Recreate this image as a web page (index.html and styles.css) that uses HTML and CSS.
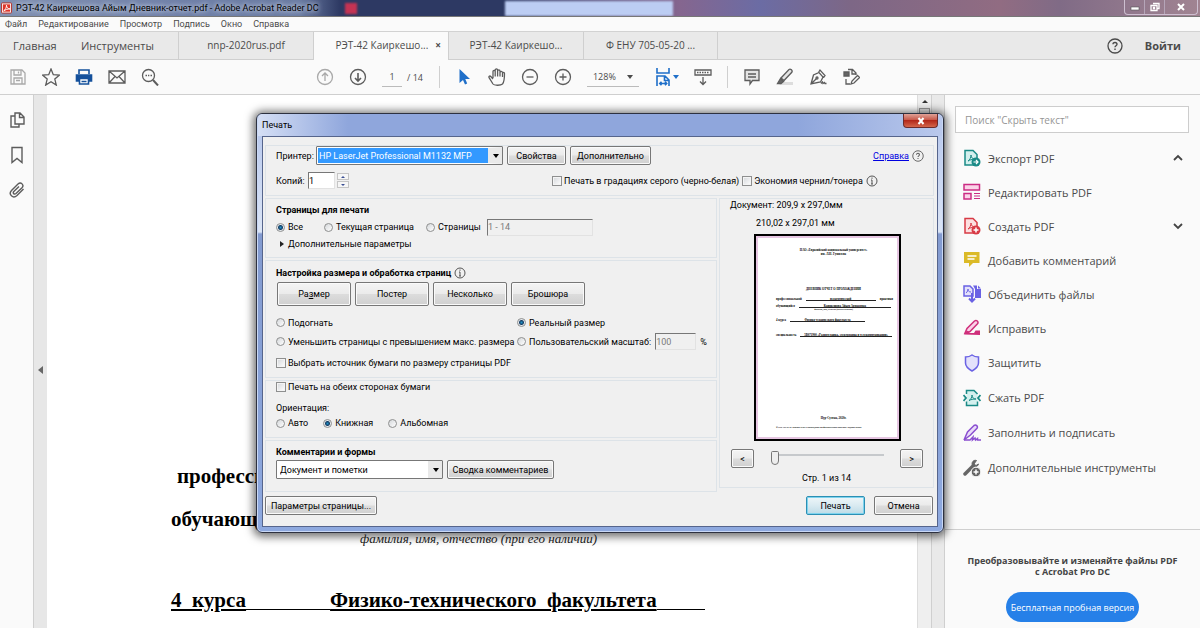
FILE: index.html
```html
<!DOCTYPE html>
<html lang="ru">
<head>
<meta charset="utf-8">
<title>РЭТ-42 Каиркешова Айым Дневник-отчет.pdf - Adobe Acrobat Reader DC</title>
<link rel="stylesheet" href="styles.css">
</head>
<body class="app">
<svg class="defs" aria-hidden="true">
  <symbol id="pdf" viewBox="0 0 18 18"><path d="M2 1.500h8l4 4V16H2z"/><path d="M5 12c2-1 3-4 3-6 0 3 2 4 4 4-3 0-5 1-7 2z" stroke-width="1" fill="none"/></symbol>
  <symbol id="info" viewBox="0 0 12 12"><circle cx="6" cy="6" r="5" fill="none" stroke="#555"/><path d="M6 5v4M5 5h1M5 9h2M6 2.500v1.300" stroke="#555" fill="none"/></symbol>
  <symbol id="help" viewBox="0 0 16 16"><circle cx="8" cy="8" r="7" fill="none" stroke="currentColor" stroke-width="1.300"/><path d="M6 6.300C6 3.800 10 4 10 6.300 10 7.800 8 7.800 8 9.300M8 10.500v1.500" fill="none" stroke="currentColor" stroke-width="1.400"/></symbol>
</svg>

<header class="titlebar">
  <svg class="logo" viewBox="0 0 12 12"><rect x=".5" y=".5" width="11" height="11" rx="1" fill="#fff" stroke="#b5271f"/><rect x="2" y="2" width="8" height="8" fill="#dd3428"/><path d="M3 9c2-1 3-4 3-6 0 3 2 4 4 4-3 0-5 1-7 2z" fill="none" stroke="#fff"/></svg>
  <span class="title">РЭТ-42 Каиркешова Айым Дневник-отчет.pdf - Adobe Acrobat Reader DC</span>
  <div class="behind"><i class="red"></i><i class="tabblur"></i></div>
  <div class="winctl">
    <button aria-label="Свернуть"><svg viewBox="0 0 12 10"><rect x="2" y="5" width="8" height="3" fill="#fff" stroke="#555" stroke-width=".6"/></svg></button>
    <button aria-label="Восстановить"><svg viewBox="0 0 12 10"><path d="M4 1.500h6v5H8M2 3.500h6v5H2zM4.500 5.500h1v1h-1z" fill="none" stroke="#fff" stroke-width="1.300"/></svg></button>
    <button class="wide" aria-label="Закрыть"><svg viewBox="0 0 12 10"><path d="M3 2l6 6M9 2L3 8" stroke="#fff" stroke-width="2"/></svg></button>
  </div>
</header>

<nav class="menubar">
  <a href="#">Файл</a><a href="#">Редактирование</a><a href="#">Просмотр</a><a href="#">Подпись</a><a href="#">Окно</a><a href="#">Справка</a>
</nav>

<nav class="tabs">
  <a class="home" href="#">Главная</a><a class="tools" href="#">Инструменты</a>
  <a class="tab" href="#">nnp-2020rus.pdf</a>
  <a class="tab active" href="#">РЭТ-42 Каиркешо...<b>×</b></a>
  <a class="tab" href="#">РЭТ-42 Каиркешо...</a>
  <a class="tab" href="#">Ф ЕНУ 705-05-20 ...</a>
  <div class="account"><svg class="qhelp"><use href="#help"/></svg><a class="login" href="#">Войти</a></div>
</nav>

<div class="toolbar">
  <div class="tgroup files">
    <button class="dim" aria-label="Сохранить"><svg viewBox="0 0 18 18"><path d="M2 2h11l3 3v11H2zM5 2v5h7V2M5 16v-6h8v6M9.500 3.500v2M7 12.500h4"/></svg></button>
    <button aria-label="Избранное"><svg viewBox="0 0 18 18"><path d="M9 1l2.300 5.700 6.200.4-4.700 4 1.500 6L9 13.800 3.700 17.100l1.500-6-4.700-4 6.200-.4z"/></svg></button>
    <button class="print" aria-label="Печать"><svg viewBox="0 0 18 18"><path d="M4 6V2h10v4" /><path d="M1.500 7h15v6h-15z" fill="#15519c"/><path d="M4.500 10.500h9V16h-9z" fill="#fff"/><path d="M6.500 13.500h5" stroke-width="1.500"/></svg></button>
    <button aria-label="Почта"><svg viewBox="0 0 18 18"><path d="M1 3h16v12H1zM1 3l8 7 8-7M1 15l6-6.500M17 15l-6-6.500"/></svg></button>
    <button aria-label="Поиск"><svg viewBox="0 0 18 18"><circle cx="7.500" cy="7.500" r="6"/><path d="M12 12l5 5.500" stroke-width="2"/><path d="M4.500 7.500H6M7 7.500h1.300M9.500 7.500H11" stroke-width="1.600"/></svg></button>
  </div>
  <div class="tgroup pages">
    <button class="dim" aria-label="Предыдущая страница"><svg viewBox="0 0 18 18"><circle cx="9" cy="9" r="7.500"/><path d="M9 13V5M6 8l3-3 3 3"/></svg></button>
    <button aria-label="Следующая страница"><svg viewBox="0 0 18 18"><circle cx="9" cy="9" r="7.500"/><path d="M9 5v8M6 10l3 3 3-3" stroke-width="1.600"/></svg></button>
    <span class="pageno"><input aria-label="Страница" value="1"><span>/ 14</span></span>
  </div>
  <div class="tgroup view">
    <button aria-label="Выделение"><svg viewBox="0 0 18 18"><path d="M4.500 1v14l3.500-3 2 4.500 2.200-1L10.300 11H15z" fill="#1f6fc9" stroke="none"/></svg></button>
    <button aria-label="Рука"><svg viewBox="0 0 18 18"><path d="M5 11L2.800 8.500C1.700 7.300.4 8.500 1.200 9.800L5 16c1 1.500 7.500 1.800 9.500 0 1.800-2 2-5 2-10.500 0-1.500-2-1.500-2 0V9M5 10V3.500c0-1.500 2.200-1.500 2.200 0V8.500M7.200 8V2c0-1.500 2.400-1.500 2.400 0v6.500M9.600 3c0-1.500 2.400-1.500 2.400 0v5.500M12 4.500c0-1.500 2.400-1.500 2.400 0"/></svg></button>
    <button aria-label="Уменьшить"><svg viewBox="0 0 18 18"><circle cx="9" cy="9" r="7.500"/><path d="M5.500 9h7"/></svg></button>
    <button aria-label="Увеличить"><svg viewBox="0 0 18 18"><circle cx="9" cy="9" r="7.500"/><path d="M5.500 9h7M9 5.500v7"/></svg></button>
    <button class="zoom">128%<i class="caret"></i></button>
    <button class="fit" aria-label="По ширине"><svg viewBox="0 0 18 20"><path d="M3 1v5h12V1M3 19V9h8l4 4v6M10.500 9v4.500H15M6 16.500h6M7.500 14.800L5.800 16.500l1.700 1.700M11 14.800l1.700 1.700-1.700 1.700"/></svg><i class="caret"></i></button>
    <button aria-label="Прокрутка"><svg viewBox="0 0 18 18"><path d="M1 2h16v5H1zM9 9v7M6 13.500L9 16.500l3-3"/><path d="M3 4.500h12" stroke-dasharray="1.500 1"/></svg></button>
  </div>
  <div class="tgroup notes">
    <button aria-label="Комментарий"><svg viewBox="0 0 18 18"><path d="M2 2h14v10.500H9.500L7 16v-3.500H2zM5 6h8M5 9h8" fill="#e4e4e4"/></svg></button>
    <button aria-label="Выделить текст"><svg viewBox="0 0 18 18"><path d="M7 14h10v3H3z" fill="#ddd" stroke="none"/><path d="M5 10l8-8.500c1.500-1 4 1 2.800 2.800L8 12.500z" fill="#e4e4e4"/><path d="M4.500 10.500l3 3L5 15.500H1.500z" fill="#666"/></svg></button>
    <button aria-label="Подписать"><svg viewBox="0 0 18 18"><path d="M2 16L4.500 7 10 4.500l4 4.500-2.500 5zM2 16l5.500-5.500M9.500 4.500L11 2l5 5.500-1.500 2M12 15.500l1.500-1.500.5 1.500 1.500-1 .5 1h1.500"/><circle cx="8" cy="10" r="1"/></svg></button>
    <button aria-label="Штамп"><svg viewBox="0 0 18 18"><path d="M2 4h5v4H2z" fill="#666"/><path d="M6 1.500h4.500L14 5v2M10 1.500V6h4M4 11v5h4M9 16l1-3 5.500-5.500 2 2L12 15z"/></svg></button>
  </div>
</div>

<main class="workspace">
  <aside class="rail">
    <svg viewBox="0 0 18 18"><path d="M7 2h5l4 4v7H7zM11.500 2v4.500H16M7 5H3v11h8v-3"/></svg>
    <svg viewBox="0 0 18 18"><path d="M4 1.500h10v15L9 12.500l-5 4z"/></svg>
    <svg viewBox="0 0 18 18"><path d="M15.500 8l-6.500 6.500c-4 3.500-9-1-5.500-5L10 3c3-2.600 6.500 1 4 3.800L8 12.500c-1.800 1.500-3.600-.4-2.200-2L11 5.500"/></svg>
  </aside>
  <div class="splitter"><i></i></div>
  <article class="page">
    <p class="line first">профессиональной  <u>  учебной  </u>  практики</p>
    <p class="line">обучающегося  <u>     Каиркешова Айым          </u></p>
    <p class="caption">фамилия, имя, отчество (при его наличии)</p>
    <p class="line course"><u>4  курса</u><span class="gap"></span><u>Физико-технического  факультета</u><span class="gap short"></span></p>
  </article>
  <div class="scroll"><i class="up"></i><i class="thumb"></i></div>
  <div class="strip"></div>
  <aside class="panel">
    <input class="search" type="text" aria-label="Поиск" placeholder="Поиск &quot;Скрыть текст&quot;">
    <ul class="toolist">
      <li><a href="#"><svg viewBox="0 0 18 18" stroke="#1a8a86" fill="#d4f0ee"><use href="#pdf"/><circle cx="13" cy="13" r="4.500" fill="#1a8a86" stroke="none"/><path d="M10.500 13h4M13 11l2 2-2 2" stroke="#fff" fill="none" stroke-width="1.200"/></svg>Экспорт PDF<svg class="chev" viewBox="0 0 12 12"><path d="M2 8l4-4 4 4"/></svg></a></li>
      <li><a href="#"><svg viewBox="0 0 18 18" stroke="#cb2c84" fill="#fbd3e8"><path d="M1 1.500h15.500V7H1zM1 10.500h7V16H1z"/><path d="M11 10.500h6M11 13h6M11 15.500h6" stroke-width="1"/></svg>Редактировать PDF</a></li>
      <li><a href="#"><svg viewBox="0 0 18 18" stroke="#d83b46" fill="#fde0e1"><use href="#pdf"/><circle cx="13" cy="13" r="4.500" fill="#d83b46" stroke="none"/><path d="M10.500 13h5M13 10.500v5" stroke="#fff" fill="none"/></svg>Создать PDF<svg class="chev" viewBox="0 0 12 12"><path d="M2 4l4 4 4-4"/></svg></a></li>
      <li><a href="#"><svg viewBox="0 0 18 18"><path d="M1 1h15.500v11H10l-4 4v-4H1z" fill="#dbba27" stroke="none"/><path d="M4.500 5h9M4.500 8h7" stroke="#fff"/></svg>Добавить комментарий</a></li>
      <li><a href="#"><svg viewBox="0 0 18 18" stroke="#6a62e4" fill="#e3e1fb"><path d="M1 1h6l3 3v7H1z"/><path d="M3 8c1.500-1 2-3 2-4 0 2 1 3 3 3" fill="none" stroke-width="1"/><path d="M10 .5h4V4h4v9h-6V4z" fill="#6a62e4" stroke="none"/><path d="M15 .5L18 3.500h-3z" fill="#6a62e4" stroke="none"/><path d="M9 8v8M6 13.500l3 3 3-3" stroke-width="2" fill="none"/></svg>Объединить файлы</a></li>
      <li><a href="#"><svg viewBox="0 0 18 18" stroke="#cf2f7b" fill="#fbd3e8"><path d="M2 14L4 9.500 11.500 2c2-1.500 4.500.7 3 2.800L7 12.500z"/><path d="M1 15.500l3-4 3 2.500h4l1.500-2.500H17v4.500z" fill="#cf2f7b" stroke="none"/></svg>Исправить</a></li>
      <li><a href="#"><svg viewBox="0 0 18 18" stroke="#6a62e4" fill="#e3e1fb"><path d="M9 1c2 1.500 4 2 6.500 2v6c0 4-3 6-6.500 8-3.500-2-6.500-4-6.500-8V3C5 3 7 2.500 9 1z"/></svg>Защитить</a></li>
      <li><a href="#"><svg viewBox="0 0 18 18" stroke="#1a8a86" fill="#d4f0ee"><path d="M3.500 1.500H11L14.500 5v11.500h-11z" stroke="none"/><path d="M3.500 5V1.500H11L14.500 5M3.500 12.500v4h11v-4" fill="none"/><path d="M6 11.500c2-1 3-3.500 3-5.500 0 3 2 4 4 4-3 0-5 .5-7 1.500z" fill="none" stroke-width="1"/><path d="M.5 6L3 9 .5 12M17.500 6L15 9l2.500 3" fill="none" stroke-width="1.800"/></svg>Сжать PDF</a></li>
      <li><a href="#"><svg viewBox="0 0 18 18" stroke="#8a4fd0" fill="#eadcf9"><path d="M1 16l3.500-8L11 1.500c2-1.300 4.300.7 3 2.800L7.500 11z"/><path d="M1 16h6l3-3-.5 3 2.500-2 .5 2 2-1.500v1.500H18" fill="none"/></svg>Заполнить и подписать</a></li>
      <li><a href="#"><svg viewBox="0 0 18 18" stroke="#666" fill="none"><path d="M2 15l8-8" stroke-width="3.500" stroke-linecap="round"/><path d="M13.500 1.500c-3-1-5.500 2-4 5 1 2 5 2 6-1.500L13 6.500 11 5z" fill="#666"  stroke-width="1"/><circle cx="13" cy="13" r="4.800" fill="#666" stroke="#fbfbfb" stroke-width="1"/><path d="M10.500 13h5M13 10.500v5" stroke="#fff"/></svg>Дополнительные инструменты</a></li>
    </ul>
    <div class="promo">
      <p>Преобразовывайте и изменяйте файлы PDF<br>с Acrobat Pro DC</p>
      <button>Бесплатная пробная версия</button>
    </div>
  </aside>
</main>

<section class="dialog" role="dialog" aria-label="Печать">
  <header class="dlg-title"><span>Печать</span><button aria-label="Закрыть"><svg viewBox="0 0 12 10"><path d="M3.500 2l5 6M8.500 2l-5 6" stroke="#fff" stroke-width="2"/></svg></button></header>
  <form class="dlg-body">
    <fieldset class="group top">
      <div class="row printer">
        <label for="printer">Принтер:</label>
        <span class="combo blue"><select id="printer"><option>HP LaserJet Professional M1132 MFP</option></select></span>
        <button type="button" class="btn props">Свойства</button>
        <button type="button" class="btn adv">Дополнительно</button>
        <a class="help" href="#">Справка</a><svg class="mini"><use href="#help"/></svg>
      </div>
      <div class="row copies">
        <label for="copies">Копий:</label><input class="field count" id="copies" value="1">
        <span class="spin"><button type="button" aria-label="Больше"><i class="caret"></i></button><button type="button" aria-label="Меньше"><i class="caret"></i></button></span>
        <label class="opt check gray"><input type="checkbox">Печать в градациях серого (черно-белая)</label>
        <label class="opt check"><input type="checkbox">Экономия чернил/тонера</label><svg class="mini"><use href="#info"/></svg>
      </div>
    </fieldset>

    <div class="columns">
      <div class="left">
        <fieldset class="group range">
          <h2>Страницы для печати</h2>
          <div class="row rangeopts">
            <label class="opt"><input type="radio" name="range" checked>Все</label>
            <label class="opt"><input type="radio" name="range">Текущая страница</label>
            <label class="opt"><input type="radio" name="range">Страницы</label>
            <input class="field off pagesfield" aria-label="Диапазон страниц" value="1 - 14" disabled>
          </div>
          <div class="more"><i></i>Дополнительные параметры</div>
        </fieldset>
        <fieldset class="group sizing">
          <h2>Настройка размера и обработка страниц <svg class="mini"><use href="#info"/></svg></h2>
          <div class="modes">
            <button type="button" class="btn">Ра<u>з</u>мер</button><button type="button" class="btn">Постер</button><button type="button" class="btn">Несколько</button><button type="button" class="btn">Брошюра</button>
          </div>
          <div class="scales">
            <label class="opt"><input type="radio" name="scale">Подогнать</label>
            <label class="opt"><input type="radio" name="scale" checked>Реальный размер</label>
            <label class="opt"><input type="radio" name="scale">Уменьшить страницы с превышением макс. размера</label>
            <div class="row custom"><label class="opt"><input type="radio" name="scale">Пользовательский масштаб:</label><input class="field off pct" aria-label="Масштаб" value="100" disabled><span>%</span></div>
          </div>
          <label class="opt check source"><input type="checkbox">Выбрать источник бумаги по размеру страницы PDF</label>
        </fieldset>
        <fieldset class="group orient">
          <label class="opt check"><input type="checkbox">Печать на обеих сторонах бумаги</label>
          <p>Ориентация:</p>
          <div class="row orientopts">
            <label class="opt"><input type="radio" name="orient">Авто</label>
            <label class="opt"><input type="radio" name="orient" checked>Книжная</label>
            <label class="opt"><input type="radio" name="orient">Альбомная</label>
          </div>
        </fieldset>
        <fieldset class="group comments">
          <h2><label for="forms">Комментарии и формы</label></h2>
          <div class="row">
            <span class="combo"><select id="forms"><option>Документ и пометки</option></select></span>
            <button type="button" class="btn summary">Сводка комментариев</button>
          </div>
        </fieldset>
      </div>
      <fieldset class="group right">
        <p class="docsize">Документ: 209,9 x 297,0мм</p>
        <p class="papersize">210,02 x 297,01 мм</p>
        <div class="preview">
          <p class="c uni">НАО «Евразийский национальный университет»<br>им. Л.Н. Гумилева</p>
          <p class="c head">ДНЕВНИК ОТЧЕТ О ПРОХОЖДЕНИИ</p>
          <p class="pl"><span>профессиональной</span><u>педагогической</u><span>практики</span></p>
          <p class="pl second"><span>обучающийся</span><u>Каиркешова Айым Армановна</u></p>
          <p class="c sub">фамилия, имя, отчество (при его наличии)</p>
          <p class="pl kurs"><span>4 курса</span><u>Физико-технического факультета</u></p>
          <p class="pl spec"><span>специальность</span><u>5В071900 «Радиотехника, электроника и телекоммуникации»</u></p>
          <p class="c city">Нур-Султан, 2020г.</p>
          <p class="foot">Ф ЕНУ 705-05-20 Дневник-отчет о прохождении профессиональной практики. Издание второе</p>
        </div>
        <div class="pager">
          <button type="button" class="btn">&lt;</button><input type="range" min="1" max="14" value="1" aria-label="Страница"><button type="button" class="btn">&gt;</button>
        </div>
        <p class="pageof">Стр. 1 из 14</p>
      </fieldset>
    </div>
    <footer class="actions">
      <button type="button" class="btn setup">Параметры страницы...</button>
      <button type="button" class="btn default">Печать</button>
      <button type="button" class="btn">Отмена</button>
    </footer>
  </form>
</section>
</body>
</html>
```
FILE: styles.css
```css
* { box-sizing: border-box; }
body, p, h2, ul, fieldset { margin: 0; padding: 0; }
button, input, select { font: inherit; color: inherit; margin: 0; padding: 0; }
button { background: none; border: 0; }
a { color: inherit; text-decoration: none; }
fieldset { border: 0; min-width: 0; }
svg { flex: none; }
.defs { display: none; }

.app {
  position: relative;
  min-height: 100vh;
  overflow: hidden;
  display: flex;
  flex-direction: column;
  background: #fafafa;
  color: #4b4b4b;
  font-family: "Open Sans", "Noto Sans", sans-serif;
  font-size: 11px;
}

/* window title */
.titlebar {
  height: 17px;
  display: flex;
  align-items: center;
  padding-left: 1px;
  overflow: hidden;
  color: #000;
  border-bottom: 1px solid #777;
  background: linear-gradient(90deg, #8191b2 0, #7081a8 180px, #6b7ca3 300px, #2d3963 340px, #2d3963 505px, #85668f 680px, #6b6ca4 760px, #7d6786 850px, #916c82 1000px, #806b86 1060px, #a18492 100%);
}
.logo { width: 11px; height: 12px; margin-right: 4px; }
.title { font-family: Roboto, sans-serif; font-size: 9px; line-height: 14px; white-space: nowrap; min-width: 325px; text-shadow: 0 0 5px #c8d2e4, 0 0 5px #c8d2e4; }
.behind { display: flex; align-items: center; gap: 148px; flex: 1; padding-left: 4px; filter: blur(1px); }
.behind .red { width: 12px; height: 11px; background: #c43353; }
.behind .tabblur { width: 168px; height: 15px; background: #bccdf3; }
.winctl { display: flex; align-self: flex-start; height: 15px; margin-right: 2px; border: 1px solid #cdbfd0; border-top: 0; border-radius: 0 0 4px 4px; }
.winctl button { width: 20px; display: grid; place-items: center; border-right: 1px solid #b5a5b8; }
.winctl .wide { width: 32px; border: 0; }
.winctl svg { width: 12px; height: 10px; }

.menubar { height: 15px; display: flex; align-items: center; gap: 11px; padding-left: 5px; font-family: Roboto, sans-serif; font-size: 9px; border-bottom: 1px solid #d2d2d2; }

/* document tabs */
.tabs { height: 28px; display: flex; align-items: stretch; background: #e9e9e9; border-bottom: 1px solid #cfcfcf; line-height: 27px; }
.home { width: 68px; padding-left: 13px; }
.tools { width: 110px; padding-left: 13px; }
.tab { width: 135px; border-left: 1px solid #cfcfcf; text-align: center; font-size: 10px; white-space: nowrap; }
.tab.active { background: #fafafa; height: 28px; display: flex; justify-content: flex-end; gap: 7px; padding-right: 7px; }
.tab:nth-child(6) { border-right: 1px solid #cfcfcf; }
.account { margin-left: auto; display: flex; align-items: center; gap: 22px; padding-right: 19px; }
.qhelp { width: 16px; height: 16px; }
.login { font-weight: 700; }

/* toolbar */
.toolbar { height: 35px; display: flex; align-items: center; padding-left: 9px; border-bottom: 1px solid #cfcfcf; flex: none; }
.tgroup { display: flex; align-items: center; gap: 15px; height: 22px; }
.tgroup svg { width: 18px; height: 18px; fill: none; stroke: #5c5c5c; stroke-width: 1.3; display: block; }
.tgroup .dim svg { stroke: #a9a9a9; }
.tgroup .print svg { stroke: #15519c; stroke-width: 1.6; }
.pages { margin-left: 157px; }
.view { margin-left: 16px; padding-left: 15px; border-left: 1px solid #cfcfcf; }
.notes { margin-left: 15px; padding-left: 15px; border-left: 1px solid #cfcfcf; }
.pageno { display: flex; gap: 5px; font-size: 9px; align-items: center; }
.pageno input { width: 20px; height: 20px; text-align: center; border: 0; border-bottom: 1px solid #bbb; background: none; }
.caret { border: 3px solid transparent; border-top: 4px solid currentColor; border-bottom: 0; }
.zoom { width: 52px; height: 20px; padding: 0 6px; font-size: 9px; display: flex; align-items: center; justify-content: space-between; border-bottom: 1px solid #bbb; }
.fit { display: flex; align-items: center; gap: 1px; color: #1f6fc9; }
.tgroup .fit svg { stroke: #1f6fc9; height: 20px; stroke-width: 1.6; }

/* workspace */
.workspace { flex: 1; display: flex; min-height: 533px; }
.rail { width: 34px; padding-top: 16px; display: flex; flex-direction: column; align-items: center; gap: 17px; border-right: 1px solid #cfcfcf; }
.rail svg { width: 18px; height: 18px; fill: none; stroke: #5c5c5c; stroke-width: 1.4; }
.splitter { width: 13px; background: #e7e7e7; display: flex; justify-content: flex-end; padding-right: 4px; align-items: center; }
.splitter i { border: 4px solid transparent; border-right: 5px solid #666; border-left: 0; margin-bottom: 16px; margin-top: 32px; }
.page { flex: 1; min-width: 0; overflow: hidden; background: #fff; color: #000; padding: 360px 0 0 124px; font-family: "Liberation Serif", serif; font-size: 21px; line-height: 43px; }
.page p { white-space: pre; }
.line { font-weight: bold; }
.line.first { padding-left: 6px; }
.caption { padding-left: 189px; font-size: 13px; line-height: 20px; margin-top: -12px; font-style: italic; color: #222; }
.course { display: flex; margin-top: 30px; }
.gap { width: 84px; height: 31px; border-bottom: 1px solid #000; }
.gap.short { width: 48px; }
.scroll { width: 14px; background: #efefef; border-left: 1px solid #ddd; padding-top: 5px; display: flex; flex-direction: column; align-items: center; gap: 5px; }
.up { border: 3px solid transparent; border-bottom: 3px solid #333; border-top: 0; }
.thumb { width: 11px; height: 330px; border: 1px solid #999; background: #e3e3e3; }
.strip { width: 14px; background: #e9e9e9; border: 1px solid #cfcfcf; border-width: 0 1px; }

.panel { width: 255px; display: flex; flex-direction: column; }
.search { height: 27px; margin: 11px 11px 0 10px; padding-left: 9px; border: 1px solid #cdcdcd; background: #fff; font-size: 10px; }
.search::placeholder { color: #959595; opacity: 1; }
.toolist { list-style: none; padding: 8px 16px 0 18px; }
.toolist li { height: 34px; }
.toolist li:nth-child(n+7) { height: 35px; }
.toolist a { height: 100%; display: flex; align-items: center; gap: 7px; white-space: nowrap; }
.toolist svg { width: 18px; height: 18px; stroke-width: 1.5; }
.toolist .chev { width: 12px; height: 12px; margin-left: auto; fill: none; stroke: #444; stroke-width: 1.8; }
.promo { flex: 1; margin-top: 44px; border-top: 1px solid #cfcfcf; text-align: center; padding-top: 25px; }
.promo p { font-size: 9px; font-weight: 700; line-height: 11px; color: #444; }
.promo button { margin-top: 15px; height: 30px; padding: 0 5px; border-radius: 15px; background: #2680e8; color: #fff; font-size: 9px; white-space: nowrap; }

/* print dialog */
.dialog {
  position: absolute;
  top: 113px;
  left: 50%;
  width: 688px;
  transform: translateX(-50%);
  padding: 0 5px 5px;
  border: 1px solid #2d3140;
  border-radius: 6px;
  background: linear-gradient(#b4c5ec 0, #dbe5f6 118px, #839bd0 120px, #8ea9df 100%);
  box-shadow: inset 0 0 0 1px #c9d8f5, 0 1px 8px 3px rgba(0, 0, 0, .55);
  color: #000;
  font-family: Roboto, "Noto Sans", sans-serif;
  font-size: 9px;
  line-height: 12px;
}
.dlg-title { height: 22px; margin: 0 -4px; padding: 0 4px 0 1px; display: flex; justify-content: space-between; background: linear-gradient(90deg, #d5dff5, #8fa6dc 90px, #8fa6dc 540px, #b9c8ec); border-radius: 5px 5px 0 0; }
.dlg-title span { line-height: 22px; padding-left: 3px; }
.dlg-title button { width: 35px; height: 14px; display: grid; place-items: center; border: 1px solid #6c2b2b; border-top: 0; border-radius: 0 0 4px 4px; background: linear-gradient(#e0a297, #c8594a 45%, #b3281a 50%, #d4654a); }
.dlg-title svg { width: 12px; height: 10px; }
.dlg-body { background: #f0f0f0; border: 1px solid #56658c; padding: 8px 3px 11px 2px; }
.group { border: 1px solid #dde3e8; padding-left: 10px; }
.row { display: flex; align-items: center; white-space: nowrap; }
h2 { font-size: 9px; font-weight: 700; line-height: 12px; display: flex; align-items: center; gap: 3px; }
.mini { width: 12px; height: 12px; color: #666; }
.mini use { width: 12px; height: 12px; }

.btn { height: 19px; border: 1px solid #777; border-radius: 2px; background: linear-gradient(#f4f4f4, #ebebeb 48%, #dcdcdc 52%, #d0d0d0); box-shadow: inset 0 0 0 1px #fafafa; white-space: nowrap; }
.field { height: 17px; border: 1px solid #e2e2e2; border-top: 1px solid #777; border-left: 1px solid #777; background: #fff; }
.off { background: #f0f0f0; color: #7a7a7a; }
.combo { position: relative; display: flex; height: 19px; border: 1px solid #777; border-radius: 1px; background: #fff; }
.combo select { appearance: none; width: 100%; border: 0; border-right: 14px solid #e9e9e9; background: none; padding: 0 3px; }
.combo.blue select { border: 1px solid #fff; border-right: 14px solid #e9e9e9; padding: 0 1px; background: #3399ff; color: #fff; }
.combo::after { content: ""; position: absolute; right: 3px; top: 7px; border: 3px solid transparent; border-top: 4px solid #000; border-bottom: 0; }

.opt { display: flex; align-items: center; gap: 3px; white-space: nowrap; }
.opt.check { gap: 2px; }
.opt input { appearance: none; width: 9px; height: 9px; flex: none; border: 1px solid #8e8f8f; background: linear-gradient(135deg, #d4d7da, #fff); }
.opt input[type="checkbox"] { width: 10px; height: 10px; box-shadow: inset 0 0 0 1px #f4f4f4; }
.opt input[type="radio"] { border-radius: 50%; }
.opt input[type="radio"]:checked { background: radial-gradient(circle, #1d93c8 0, #173f66 2px, #e5eaee 3px); }

.top { height: 51px; padding-right: 9px; }
.printer label { width: 40px; }
.printer .combo { width: 187px; margin-right: 4px; }
.props { width: 59px; margin-right: 4px; }
.adv { width: 81px; }
.help { margin-left: auto; margin-right: 3px; color: #0000e0; text-decoration: underline; }
.copies { height: 17px; margin-top: 7px; }
.copies > label:first-child { width: 32px; }
.count { width: 27px; margin-right: 2px; }
.spin { display: grid; width: 12px; height: 15px; gap: 1px; }
.spin button { display: grid; place-items: center; border: 1px solid #c5c5c5; background: #f6f6f6; height: 7px; }
.spin .caret { border-width: 2px; border-top: 2px solid #3b4f94; border-bottom: 0; }
.spin button:first-child .caret { border: 2px solid transparent; border-bottom-color: #3b4f94; border-top: 0; }
.gray { margin-left: 203px; margin-right: 3px; }
.copies .mini { margin-left: 3px; }

.columns { display: grid; grid-template-columns: 1fr 215px; gap: 2px; margin-top: 2px; align-items: start; }
.left { display: grid; gap: 2px; }
.range { height: 60px; padding-top: 5px; }
.rangeopts { height: 20px; margin-top: 1px; }
.rangeopts .opt:nth-child(1) { width: 48px; }
.rangeopts .opt:nth-child(2) { width: 102px; }
.rangeopts .opt:nth-child(3) { width: 61px; }
.pagesfield { width: 106px; }
.more { display: flex; align-items: center; gap: 4px; padding-left: 4px; margin-top: 1px; }
.more i { border: 3px solid transparent; border-left: 4px solid #222; border-right: 0; }
.sizing { height: 118px; padding-top: 6px; }
.modes { display: grid; grid-template-columns: repeat(4, 74px); gap: 4px; margin: 3px 0 0 1px; }
.modes .btn { height: 24px; }
.scales { display: grid; grid-template-columns: 241px 1fr; grid-auto-rows: 19px; margin-top: 7px; }
.custom .pct { width: 41px; margin: 0 4px 0 4px; }
.source { margin-top: 6px; }
.orient { height: 58px; }
.orient p { margin-top: 9px; }
.orientopts { gap: 15px; margin-top: 3px; }
.comments { height: 52px; padding-top: 5px; }
.comments .combo { width: 167px; margin-right: 4px; }
.comments .row { margin-top: 2px; }
.summary { width: 107px; }

.right { padding: 0 10px; height: 290px; }
.docsize { height: 18px; }
.papersize { padding-left: 26px; }
.preview {
  width: 147px;
  height: 207px;
  margin: 5px 0 0 24px;
  padding: 12px 0 0 20px;
  border: 2px solid #000;
  box-shadow: inset 0 0 0 2px #e6c6e2;
  background: #fff;
  font-family: "Liberation Serif", serif;
  font-size: 3px;
  line-height: 4px;
  font-weight: bold;
  white-space: nowrap;
  overflow: hidden;
}
.preview .c { text-align: center; padding-right: 8px; }
.preview .head { margin-top: 31px; }
.pl { display: flex; gap: 4px; margin-top: 6px; padding-right: 6px; }
.pl u { flex: 1; text-align: center; text-decoration: none; border-bottom: 1px solid #222; height: 4px; }
.pl.second { margin-top: 3px; padding-right: 8px; }
.preview .sub { font-size: 2px; line-height: 2px; }
.pl.kurs { margin-top: 8px; padding-right: 34px; }
.pl.spec { margin-top: 11px; padding-right: 7px; }
.preview .city { margin-top: 79px; }
.preview .foot { margin-top: 5px; font-size: 2px; }
.pager { display: flex; justify-content: space-between; margin-top: 8px; padding-left: 1px; }
.pager .btn { width: 23px; }
.pager input { appearance: none; width: 113px; height: 18px; background: linear-gradient(#c6c9cc, #c6c9cc) center 5px / 100% 2px no-repeat; }
.pager input::-webkit-slider-thumb { appearance: none; width: 8px; height: 14px; border: 1px solid #777; border-radius: 2px 2px 5px 5px; background: #eee; }
.pageof { text-align: center; margin-top: 4px; }

.actions { display: flex; gap: 9px; margin-top: 4px; padding-right: 1px; }
.actions .btn { width: 59px; }
.actions .setup { width: 112px; margin-right: auto; }
.actions .default { border-color: #2c8fb4; box-shadow: inset 0 0 0 1px #7ed3ee; background: linear-gradient(#eef6f9, #d9eaf1 50%, #bddbe7); }
```
